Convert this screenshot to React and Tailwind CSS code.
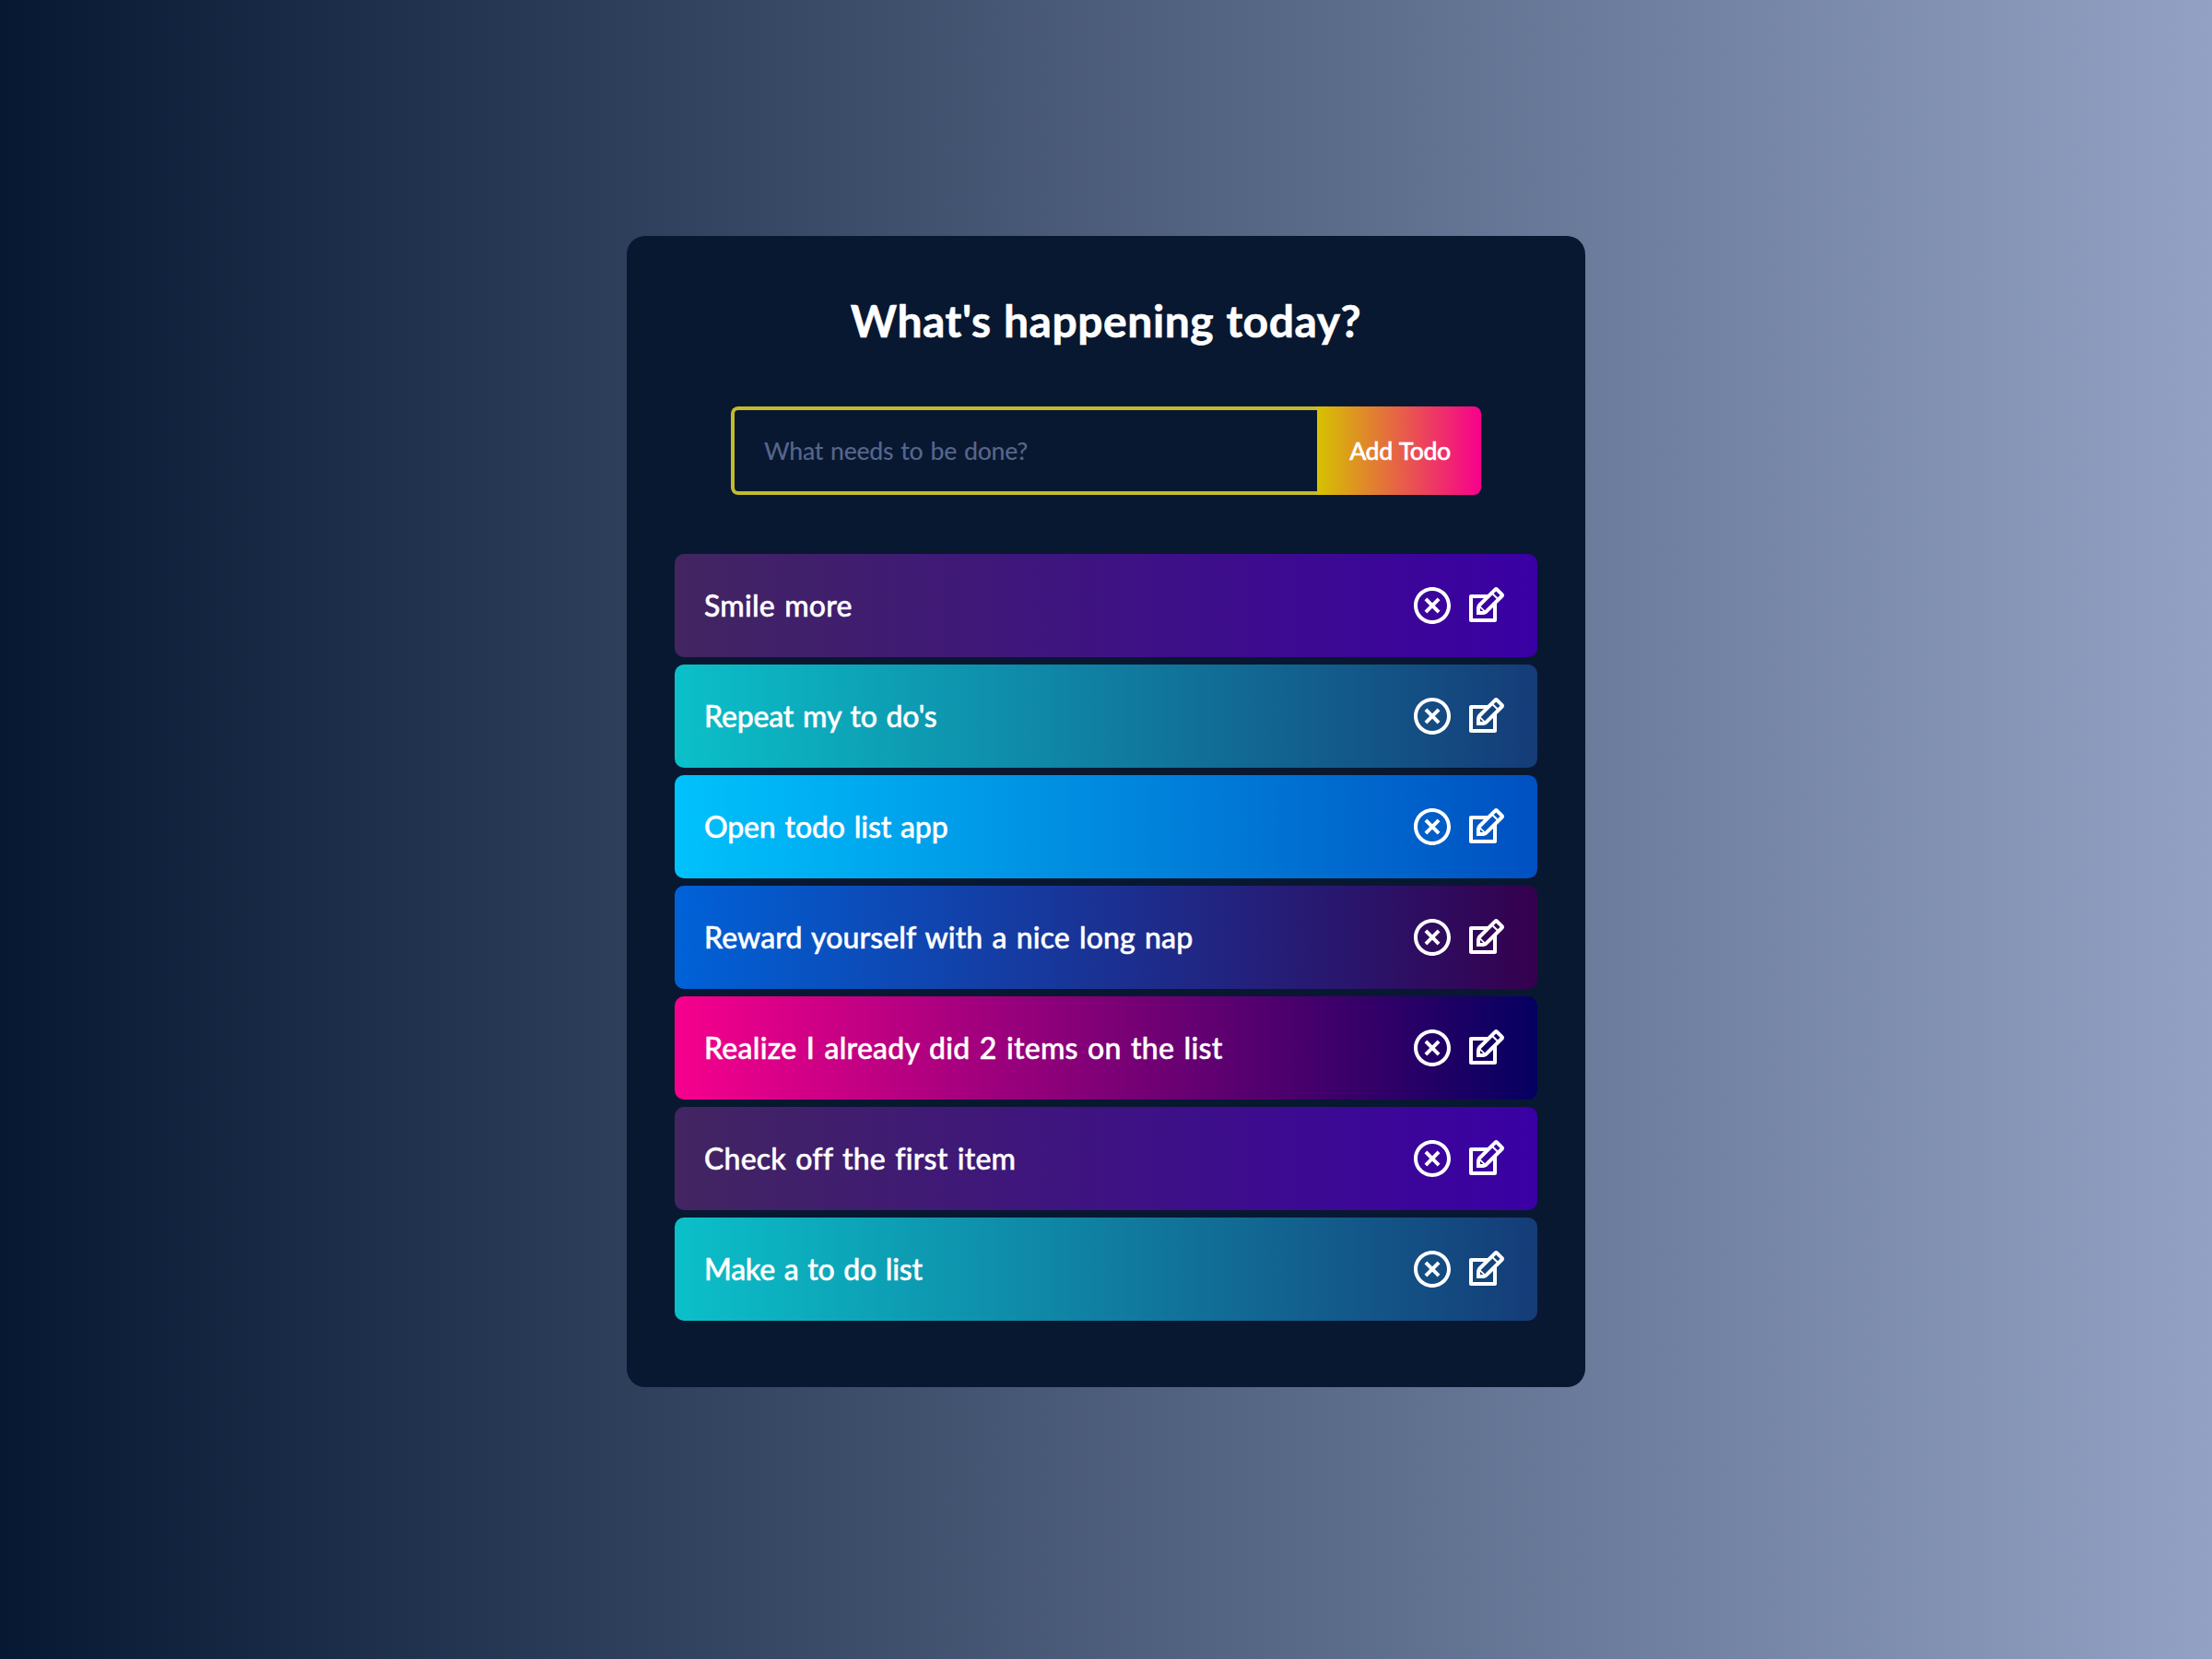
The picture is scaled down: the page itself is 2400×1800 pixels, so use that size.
import { RiCloseCircleLine } from "react-icons/ri";
import { TiEdit } from "react-icons/ti";

const violet = "bg-[linear-gradient(90deg,#422561,#3a00a4)]";
const teal = "bg-[linear-gradient(90deg,#0bc0c9,#153c78)]";
const sky = "bg-[linear-gradient(90deg,#00c2fc,#0050c1)]";
const plum = "bg-[linear-gradient(90deg,#0062d8,#35004e)]";
const magenta = "bg-[linear-gradient(90deg,#f7008d,#050060)]";

const todos = [
  { text: "Smile more", bg: violet, track: "tracking-[0.2px]" },
  { text: "Repeat my to do's", bg: teal, track: "tracking-[-0.2px]" },
  { text: "Open todo list app", bg: sky, track: "tracking-[-0.15px]" },
  { text: "Reward yourself with a nice long nap", bg: plum, track: "tracking-[0.1px]" },
  { text: "Realize I already did 2 items on the list", bg: magenta, track: "tracking-[0.25px]" },
  { text: "Check off the first item", bg: violet, track: "tracking-[0.2px]" },
  { text: "Make a to do list", bg: teal, track: "tracking-[-0.25px]" },
];

function TodoRow({ text, bg, track }) {
  return (
    <li className={`flex h-28 items-center justify-between rounded-[10px] px-8 text-white ${bg}`}>
      <span
        className={`text-[32px] leading-none font-medium whitespace-nowrap [word-spacing:2px] [-webkit-text-stroke:0.5px_white] ${track}`}
      >
        {text}
      </span>
      <span className="flex items-center gap-2.5 text-[48px]">
        <RiCloseCircleLine />
        <TiEdit />
      </span>
    </li>
  );
}

export default function App() {
  return (
    <div className="flex h-[1800px] w-[2400px] items-start justify-center bg-[linear-gradient(90deg,#061832,#93a2c4)] pt-64 font-['Trebuchet_MS','Lato',sans-serif] [font-variant-ligatures:none]">
      <main className="flex h-[1249px] w-[1040px] flex-col items-center rounded-[20px] bg-[#081831]">
        <h1 className="mt-[58px] h-[68px] text-[48px] leading-[68px] font-bold tracking-[0.55px] whitespace-nowrap text-white [word-spacing:1px] [-webkit-text-stroke:0.6px_white]">
          What's happening today?
        </h1>
        <form className="mt-[59px] flex h-24">
          <input
            className="w-[636px] rounded-l-lg border-4 border-r-0 border-[#c4bb2c] bg-transparent pt-0.5 pl-8 text-[26.67px] font-medium tracking-[-0.3px] text-white outline-none [word-spacing:1.6px] placeholder:text-[#56658a]"
            placeholder="What needs to be done?"
          />
          <button
            type="button"
            className="w-[178px] rounded-r-lg bg-[linear-gradient(90deg,#d6c200,#f7008d)] pl-0.5 text-[26.67px] font-medium tracking-[-0.45px] whitespace-nowrap text-white [word-spacing:1.6px] [-webkit-text-stroke:0.5px_white]"
          >
            Add Todo
          </button>
        </form>
        <ul className="mt-16 flex w-[936px] flex-col gap-2">
          {todos.map((t) => (
            <TodoRow key={t.text} {...t} />
          ))}
        </ul>
      </main>
    </div>
  );
}
